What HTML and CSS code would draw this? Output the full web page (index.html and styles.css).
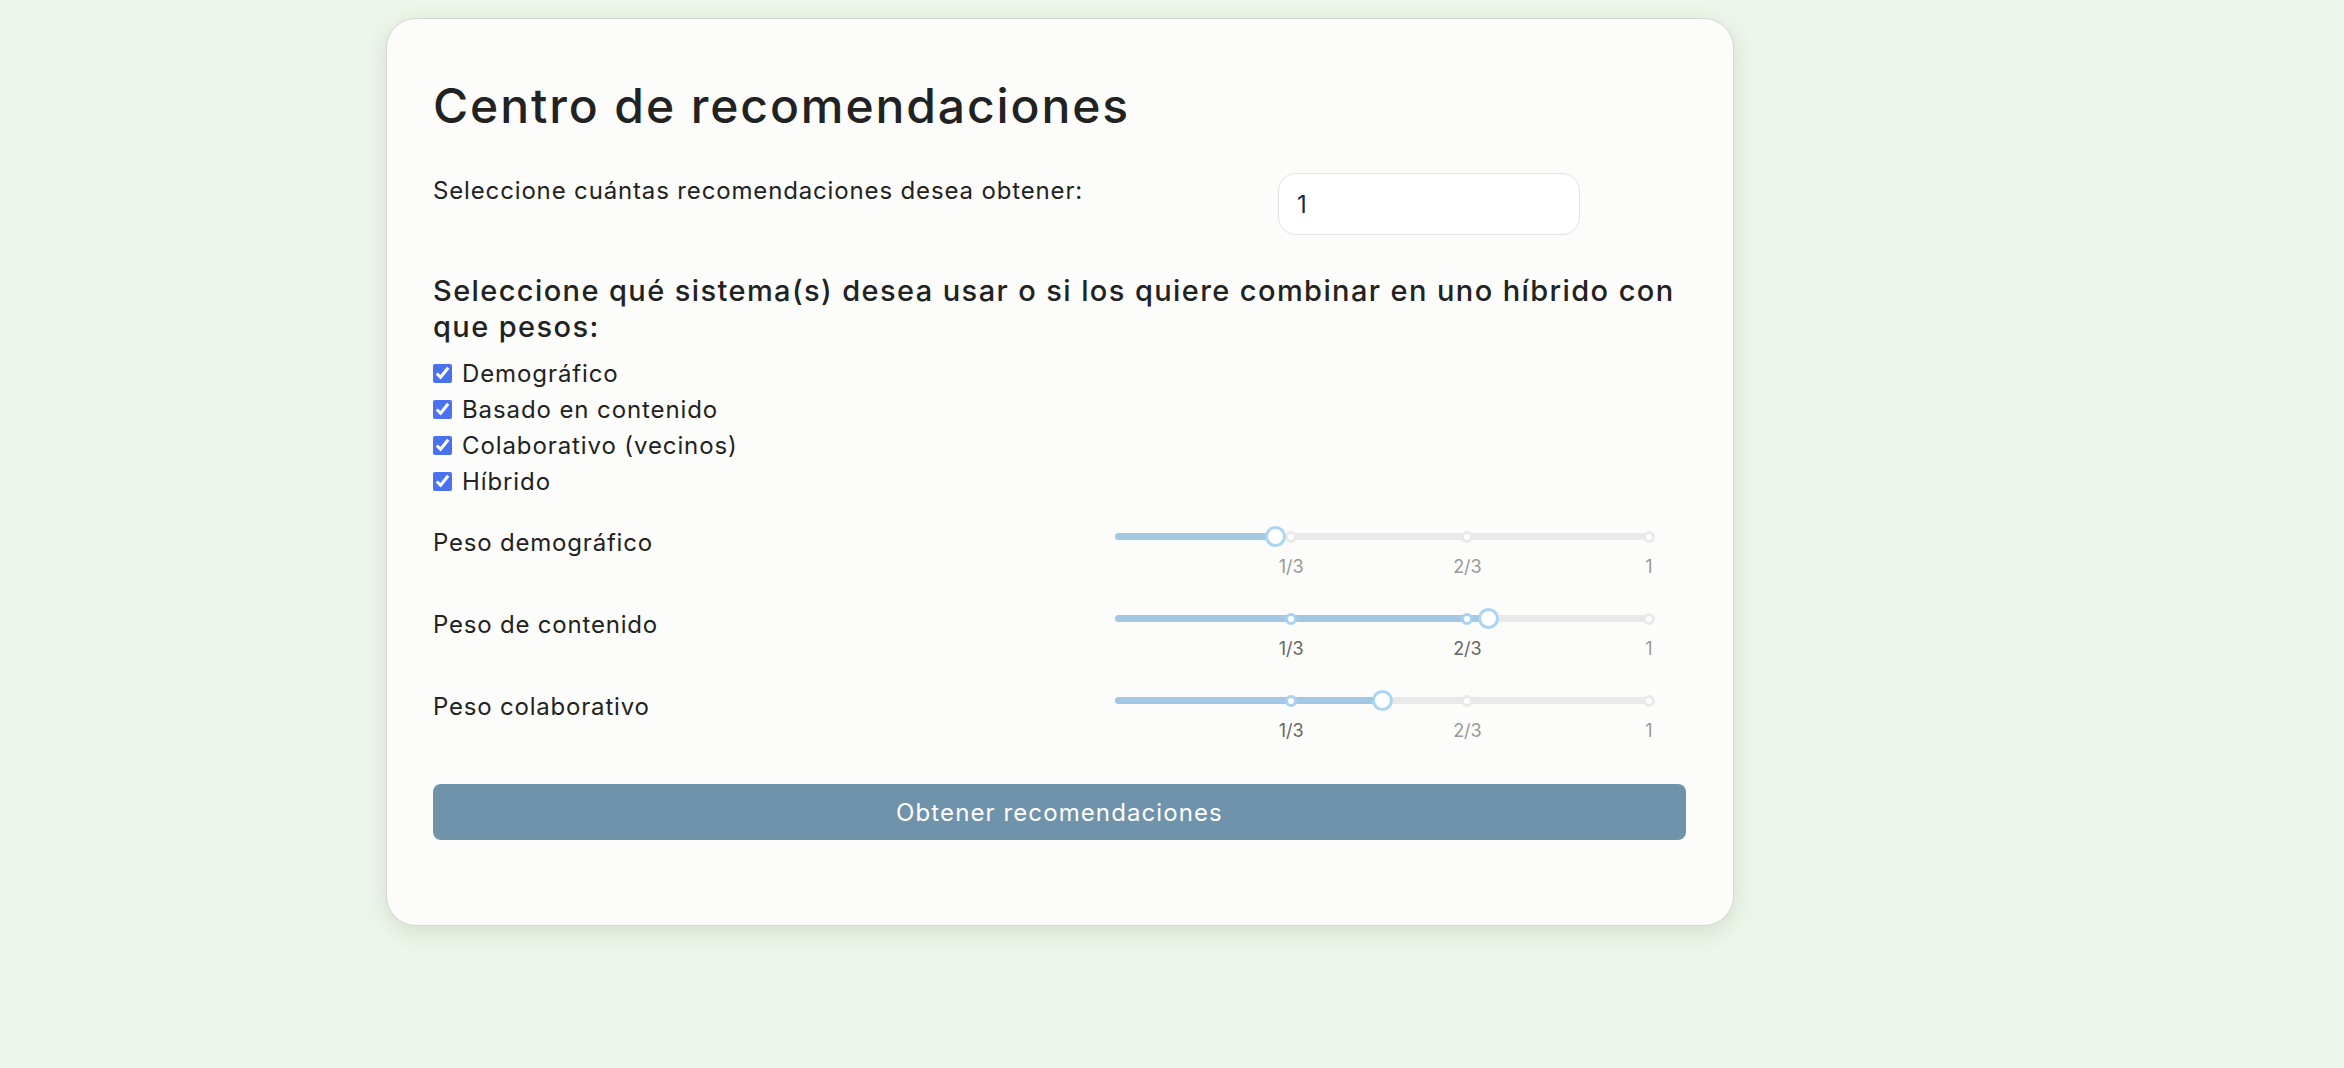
FILE: index.html
```html
<!DOCTYPE html>
<html lang="es">
<head>
<meta charset="utf-8">
<title>Centro de recomendaciones</title>
<link rel="stylesheet" href="styles.css">
</head>
<body>
<div class="page">
  <div class="card">
    <h1 class="title">Centro de recomendaciones</h1>
    <div class="count-row">
      <label class="count-label" for="n">Seleccione cuántas recomendaciones desea obtener:</label>
      <input class="count-input" id="n" type="number" value="1">
    </div>
    <h3 class="systems-title">Seleccione qué sistema(s) desea usar o si los quiere combinar en uno híbrido con<br>que pesos:</h3>
    <ul class="checks">
      <li><label class="check"><input type="checkbox" checked><span>Demográfico</span></label></li>
      <li><label class="check"><input type="checkbox" checked><span>Basado en contenido</span></label></li>
      <li><label class="check"><input type="checkbox" checked><span>Colaborativo (vecinos)</span></label></li>
      <li><label class="check"><input type="checkbox" checked><span>Híbrido</span></label></li>
    </ul>
    <div class="weights">
      <div class="weight-row">
        <span class="weight-label">Peso demográfico</span>
        <div class="slider">
          <div class="rail"></div>
          <div class="track" style="width:30%"></div>
          <span class="dot" style="left:33%"></span>
          <span class="dot" style="left:66%"></span>
          <span class="dot" style="left:100%"></span>
          <span class="thumb" style="left:30%"></span>
          <span class="mark" style="left:33%">1/3</span>
          <span class="mark" style="left:66%">2/3</span>
          <span class="mark" style="left:100%">1</span>
        </div>
      </div>
      <div class="weight-row">
        <span class="weight-label">Peso de contenido</span>
        <div class="slider">
          <div class="rail"></div>
          <div class="track" style="width:70%"></div>
          <span class="dot active" style="left:33%"></span>
          <span class="dot active" style="left:66%"></span>
          <span class="dot" style="left:100%"></span>
          <span class="thumb" style="left:70%"></span>
          <span class="mark active" style="left:33%">1/3</span>
          <span class="mark active" style="left:66%">2/3</span>
          <span class="mark" style="left:100%">1</span>
        </div>
      </div>
      <div class="weight-row">
        <span class="weight-label">Peso colaborativo</span>
        <div class="slider">
          <div class="rail"></div>
          <div class="track" style="width:50%"></div>
          <span class="dot active" style="left:33%"></span>
          <span class="dot" style="left:66%"></span>
          <span class="dot" style="left:100%"></span>
          <span class="thumb" style="left:50%"></span>
          <span class="mark active" style="left:33%">1/3</span>
          <span class="mark" style="left:66%">2/3</span>
          <span class="mark" style="left:100%">1</span>
        </div>
      </div>
    </div>
    <button class="submit" type="button">Obtener recomendaciones</button>
  </div>
</div>
</body>
</html>
```
FILE: styles.css
```css
html, body {
  margin: 0;
  background: #edf6ea;
}
body {
  font-family: Inter, "Noto Sans", sans-serif;
  color: #222222;
}
.page {
  padding: 18px 0 60px 386px;
}
.card {
  width: 1348px;
  box-sizing: border-box;
  background: #fcfdfa;
  border: 1px solid #d3d9d1;
  border-radius: 30px;
  box-shadow: 0 6px 22px rgba(70, 95, 70, 0.16);
  padding: 58px 47px 50px 46px;
}
.title {
  margin: 0;
  font-size: 48px;
  line-height: 58px;
  font-weight: 500;
  letter-spacing: 1.9px;
  color: #222222;
}
.count-row {
  margin-top: 38px;
  display: grid;
  grid-template-columns: 845px 302px;
  align-items: start;
}
.count-label {
  font-size: 24px;
  line-height: 36px;
  letter-spacing: 0.85px;
}
.count-input {
  box-sizing: border-box;
  width: 302px;
  height: 62px;
  border: 1.5px solid #dfe2e6;
  border-radius: 18px;
  background: #ffffff;
  padding: 0 18px;
  font-family: inherit;
  font-size: 24px;
  color: #1b2a48;
  outline: none;
  -moz-appearance: textfield;
}
.count-input::-webkit-inner-spin-button,
.count-input::-webkit-outer-spin-button {
  -webkit-appearance: none;
  margin: 0;
}
.systems-title {
  margin: 38px 0 0;
  font-size: 29px;
  line-height: 36px;
  font-weight: 500;
  letter-spacing: 1.4px;
}
.checks {
  list-style: none;
  margin: 10px 0 0;
  padding: 0;
}
.check {
  display: flex;
  align-items: center;
  height: 36px;
  font-size: 24px;
  letter-spacing: 0.9px;
}
.check input {
  width: 19px;
  height: 19px;
  margin: 0 10px 0 0;
  accent-color: #4a72f0;
}
.weights {
  margin-top: 26px;
}
.weight-row {
  display: grid;
  grid-template-columns: 682px 534px;
  height: 82px;
}
.weight-label {
  font-size: 24px;
  line-height: 36px;
  letter-spacing: 0.8px;
}
.slider {
  position: relative;
  height: 56px;
}
.rail {
  position: absolute;
  left: 0;
  right: 0;
  top: 8px;
  height: 7px;
  border-radius: 4px;
  background: #e9e9e9;
}
.track {
  position: absolute;
  left: 0;
  top: 8px;
  height: 7px;
  border-radius: 4px;
  background: #a2c8e4;
}
.dot {
  position: absolute;
  top: 5.5px;
  width: 12px;
  height: 12px;
  margin-left: -6px;
  box-sizing: border-box;
  border: 3px solid #e9e9e9;
  border-radius: 50%;
  background: #ffffff;
}
.dot.active {
  border-color: #a8d2ee;
}
.thumb {
  position: absolute;
  top: 1px;
  width: 21px;
  height: 21px;
  margin-left: -10.5px;
  box-sizing: border-box;
  border: 3px solid #a9d6f5;
  border-radius: 50%;
  background: #ffffff;
}
.mark {
  position: absolute;
  top: 31px;
  transform: translateX(-50%);
  font-size: 18px;
  line-height: 22px;
  color: #999999;
  white-space: nowrap;
}
.mark.active {
  color: #666666;
}
.submit {
  display: block;
  width: 100%;
  height: 56px;
  margin: 13px 0 35px;
  border: none;
  border-radius: 8px;
  background: #6f93ab;
  color: #ffffff;
  font-family: inherit;
  font-size: 24px;
  letter-spacing: 1.1px;
}
```
